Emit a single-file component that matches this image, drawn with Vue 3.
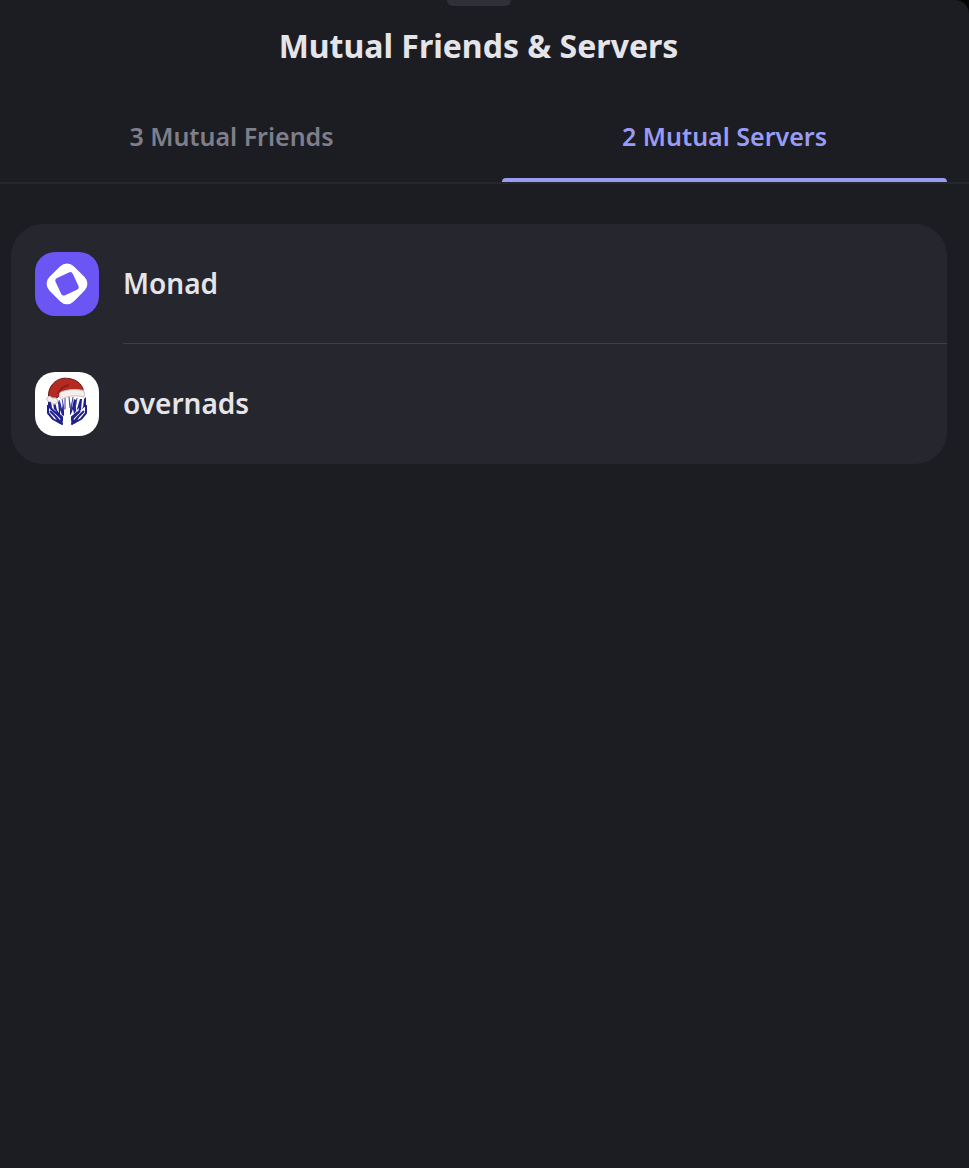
<template>
  <main class="sheet">
    <div class="sheet-handle"></div>
    <h1 class="sheet-title">Mutual Friends &amp; Servers</h1>

    <div class="tabs" role="tablist">
      <button
        v-for="tab in tabs"
        :key="tab.id"
        type="button"
        role="tab"
        class="tab"
        :class="{ 'tab-active': tab.id === activeTab }"
        :aria-selected="tab.id === activeTab"
        @click="activeTab = tab.id"
      >
        {{ tab.label }}
      </button>
    </div>

    <ul v-if="activeTab === 'servers'" class="server-list">
      <li v-for="server in servers" :key="server.id" class="server-item">
        <button type="button" class="server-button">
          <svg v-if="server.id === 'monad'" class="avatar avatar-monad" viewBox="0 0 64 64" aria-hidden="true">
            <rect x="14.800" y="14.600" width="34.400" height="34.400" rx="9.500" fill="#fff" transform="rotate(45 32 31.800)" />
            <rect x="22.500" y="22.300" width="19" height="19" rx="3" fill="#6b55f5" transform="rotate(-25 32 31.800)" />
          </svg>
          <svg v-else class="avatar avatar-overnads" viewBox="0 0 64 64" aria-hidden="true">
            <!-- hair strands -->
            <g fill="#20208c">
              <path d="M13 28l3 1 1 7 2 2-1-8h2l2 8 2 3-1-11 2-1 2 8 1-6 1 8v5l-2-1-2-5v5l-3-3-3-3 1 5-4-4-3-3Z" />
              <path d="M51 25l-2 2-1 8-2 3 1-11h-2l-3 10-1 3v-12l-2-1-2 9-1-7-1 9v5l1-1 2-5 1 5 2-3 3-3-1 5 4-4 4-3Z" />
            </g>
            <g fill="none" stroke="#20208c" stroke-width="2" stroke-linejoin="round">
              <path d="M13 33v8l5 6 7 4-5-7M15 39l6 6 6 7-1-6-7-7M21 40l6 5v4" />
              <path d="M51 33v8l-5 6-7 4 5-7M49 39l-6 6-6 7 1-6 7-7M43 40l-6 5v4" />
            </g>
            <path
              fill="none"
              stroke="#3a3aa5"
              stroke-width="1"
              d="M27 26l2 12M30 26v11M34 25l1 11M38 25l-2 13M24 28l2 10M42 26l-2 11"
            />
            <!-- hat -->
            <path
              fill="#b52a22"
              stroke="#6b1a15"
              stroke-width="1"
              d="M13.500 25.500C12.500 15 20 7 29 6.200 39 6 47.500 10.500 48.500 19.500L25 23 20 28Z"
            />
            <path fill="none" stroke="#8d1e18" stroke-width="2" d="M23 22C25 17 29 14 34 13" />
            <path
              fill="#f4efed"
              stroke="#c9bebe"
              stroke-width="1"
              d="M25 20.500C32 17 41 17 48.500 18.500Q50.500 21 49 25C41 23 33 23.500 26.500 27.500Q23 25 25 20.500Z"
            />
            <path
              fill="#f4efed"
              stroke="#c9bebe"
              stroke-width="1"
              d="M13 24.500q3-1 4 1.500 4-1 6 2 0 4-3 4-3 1-4-2-4 0-4.500-3Z"
            />
          </svg>
          <span class="server-name">{{ server.name }}</span>
        </button>
      </li>
    </ul>
  </main>
</template>

<script setup>
import { ref } from 'vue';

const tabs = [
  { id: 'friends', label: '3 Mutual Friends' },
  { id: 'servers', label: '2 Mutual Servers' }
];

const servers = [
  { id: 'monad', name: 'Monad' },
  { id: 'overnads', name: 'overnads' }
];

const activeTab = ref('servers');
</script>

<style>
body {
  margin: 0;
  background: #050507;
}
</style>

<style scoped>
.sheet {
  display: flex;
  flex-direction: column;
  box-sizing: border-box;
  min-height: 100vh;
  padding-bottom: 40px;
  background: #1c1d22;
  border-top-right-radius: 14px;
  font-family: 'Noto Sans', 'Open Sans', sans-serif;
  color: #e4e4e9;
}

.sheet-handle {
  align-self: center;
  width: 64px;
  height: 6px;
  margin-right: 12px;
  border-radius: 0 0 6px 6px;
  background: #303039;
}

.sheet-title {
  margin: 0;
  padding: 16px 22px 0 10px;
  font-size: 32px;
  line-height: 48px;
  font-weight: 700;
  text-align: center;
}

.tabs {
  display: grid;
  grid-template-columns: 1fr 1fr;
  gap: 48px;
  margin-top: 20px;
  padding: 0 22px 0 9px;
  border-bottom: 2px solid #26272c;
}

.tab {
  position: relative;
  height: 92px;
  padding: 0;
  border: none;
  background: none;
  font-family: inherit;
  font-size: 25px;
  line-height: 36px;
  font-weight: 600;
  color: #7e7f8b;
  cursor: pointer;
}

.tab-active {
  color: #989cf5;
}

.tab-active::after {
  content: '';
  position: absolute;
  right: 0;
  bottom: 0;
  left: 0;
  height: 4px;
  border-radius: 4px 4px 0 0;
  background: #989cf5;
}

.server-list {
  margin: 40px 22px 0 11px;
  padding: 0;
  border-radius: 32px;
  background: #26262e;
  list-style: none;
  overflow: hidden;
}

.server-item {
  position: relative;
}

.server-item + .server-item::before {
  content: '';
  position: absolute;
  top: -1px;
  right: 0;
  left: 112px;
  height: 1px;
  background: #3e3e46;
}

.server-button {
  display: flex;
  align-items: center;
  gap: 24px;
  width: 100%;
  height: 120px;
  padding: 0 24px;
  border: none;
  background: none;
  font-family: inherit;
  color: inherit;
  text-align: left;
  cursor: pointer;
}

.avatar {
  flex-shrink: 0;
  width: 64px;
  height: 64px;
  border-radius: 20px;
}

.avatar-monad {
  background: #6b55f5;
}

.avatar-overnads {
  background: #fff;
}

.server-name {
  padding-bottom: 2px;
  font-size: 28px;
  line-height: 40px;
  font-weight: 600;
}
</style>
